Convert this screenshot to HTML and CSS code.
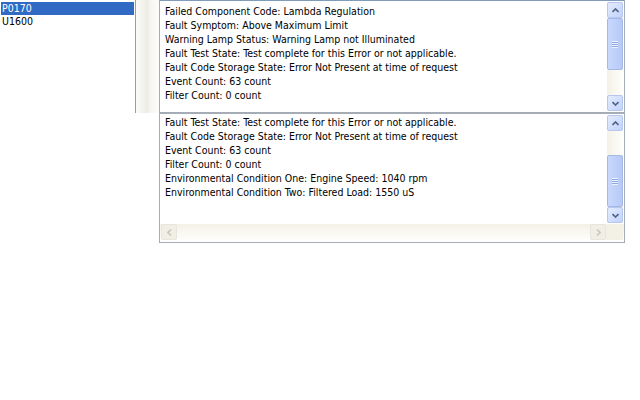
FILE: index.html
```html
<!DOCTYPE html>
<html lang="en">
<head>
    <meta charset="UTF-8">
    <title>Fault codes</title>
    <link rel="stylesheet" href="styles.css">
</head>
<body>
    <div class="app">
        <div class="code-list">
            <div class="code-item selected">P0170</div>
            <div class="code-item">U1600</div>
        </div>
        <div class="splitter"></div>
        <div class="panes">
            <div class="pane top-pane">
                <div class="pane-body">
                    <div class="text">
                        <div>Failed Component Code: Lambda Regulation</div>
                        <div>Fault Symptom: Above Maximum Limit</div>
                        <div>Warning Lamp Status: Warning Lamp not Illuminated</div>
                        <div>Fault Test State: Test complete for this Error or not applicable.</div>
                        <div>Fault Code Storage State: Error Not Present at time of request</div>
                        <div>Event Count: 63 count</div>
                        <div>Filter Count: 0 count</div>
                    </div>
                    <div class="vscroll">
                        <div class="sbtn up"><svg viewBox="0 0 7 5" width="7" height="5"><path d="M0.5 4 L3.5 1 L6.5 4" fill="none" stroke="#4d6185" stroke-width="1.6"/></svg></div>
                        <div class="thumb top-thumb"><span class="grip"></span></div>
                        <div class="track"></div>
                        <div class="sbtn down"><svg viewBox="0 0 7 5" width="7" height="5"><path d="M0.5 1 L3.5 4 L6.5 1" fill="none" stroke="#4d6185" stroke-width="1.6"/></svg></div>
                    </div>
                </div>
            </div>
            <div class="pane bottom-pane">
                <div class="pane-body">
                    <div class="text">
                        <div>Fault Test State: Test complete for this Error or not applicable.</div>
                        <div>Fault Code Storage State: Error Not Present at time of request</div>
                        <div>Event Count: 63 count</div>
                        <div>Filter Count: 0 count</div>
                        <div>Environmental Condition One: Engine Speed: 1040 rpm</div>
                        <div>Environmental Condition Two: Filtered Load: 1550 uS</div>
                    </div>
                    <div class="vscroll">
                        <div class="sbtn up"><svg viewBox="0 0 7 5" width="7" height="5"><path d="M0.5 4 L3.5 1 L6.5 4" fill="none" stroke="#4d6185" stroke-width="1.6"/></svg></div>
                        <div class="track"></div>
                        <div class="thumb bottom-thumb"><span class="grip"></span></div>
                        <div class="sbtn down"><svg viewBox="0 0 7 5" width="7" height="5"><path d="M0.5 1 L3.5 4 L6.5 1" fill="none" stroke="#4d6185" stroke-width="1.6"/></svg></div>
                    </div>
                </div>
                <div class="hscroll">
                    <div class="sbtn disabled"><svg viewBox="0 0 5 7" width="5" height="7"><path d="M4 0.5 L1 3.5 L4 6.5" fill="none" stroke="#c9c7ba" stroke-width="1.6"/></svg></div>
                    <div class="htrack"></div>
                    <div class="sbtn disabled"><svg viewBox="0 0 5 7" width="5" height="7"><path d="M1 0.5 L4 3.5 L1 6.5" fill="none" stroke="#c9c7ba" stroke-width="1.6"/></svg></div>
                    <div class="corner"></div>
                </div>
            </div>
        </div>
    </div>
</body>
</html>
```

FILE: styles.css
```css
body {
    margin: 0;
    background: #fff;
    font-family: "DejaVu Sans Condensed", "Liberation Sans", sans-serif;
    font-size: 10.5px;
    color: #000;
}
.app {
    display: flex;
    align-items: flex-start;
}
.code-list {
    width: 136px;
    height: 113px;
    border-right: 1px solid #9d9d9d;
    padding: 2px 0 0 1px;
    box-sizing: border-box;
}
.code-item {
    width: 133px;
    height: 13px;
    line-height: 13px;
    padding-left: 1px;
    box-sizing: border-box;
}
.code-item.selected {
    background: #316ac5;
    color: #fff;
}
.splitter {
    width: 23px;
    height: 113px;
    background: linear-gradient(to right, #fbfbf9 0, #f4f3ee 6px, #ecebe4 11px, #f7f6f2 15px, #fdfdfc 23px);
}
.panes {
    width: 466px;
}
.pane {
    border: 1px solid #a5acb5;
    box-sizing: border-box;
    background: #fff;
}
.top-pane {
    height: 113px;
    border-top-color: #7f9db9;
}
.bottom-pane {
    height: 130px;
}
.pane-body {
    display: flex;
    padding: 1px;
}
.top-pane .pane-body {
    height: 109px;
}
.bottom-pane .pane-body {
    height: 108px;
}
.text {
    flex: 1;
    padding: 2px 0 0 4px;
    line-height: 14px;
    white-space: nowrap;
    overflow: hidden;
}
.bottom-pane .text {
    padding-top: 0;
}
.vscroll {
    width: 16px;
    display: flex;
    flex-direction: column;
    background: #f5f4ee;
}
.track {
    flex: 1;
    background: linear-gradient(to right, #f3f1e7, #fefefb);
}
.sbtn {
    width: 16px;
    height: 16px;
    flex: none;
    box-sizing: border-box;
    border: 1px solid #b7c7ef;
    border-radius: 2px;
    background: linear-gradient(to bottom right, #e4ebfd, #c1d3fb);
    display: flex;
    align-items: center;
    justify-content: center;
}
.sbtn.disabled {
    border-color: #e8e6dc;
    background: #f1efe5;
}
.thumb {
    height: 52px;
    flex: none;
    box-sizing: border-box;
    border: 1px solid #a5b8e6;
    border-radius: 2px;
    background: linear-gradient(to right, #c9d8fc, #b6c9f7);
    display: flex;
    align-items: center;
    justify-content: center;
}
.grip {
    width: 6px;
    height: 7px;
    background: repeating-linear-gradient(to bottom, #eef3ff 0, #eef3ff 1px, #8ea7e0 1px, #8ea7e0 2px);
}
.hscroll {
    display: flex;
    height: 16px;
    padding: 0 1px;
    background: linear-gradient(to bottom, #f3f1e7, #fefefb);
}
.htrack {
    flex: 1;
}
.corner {
    width: 17px;
    background: #f3f1e6;
}
```
